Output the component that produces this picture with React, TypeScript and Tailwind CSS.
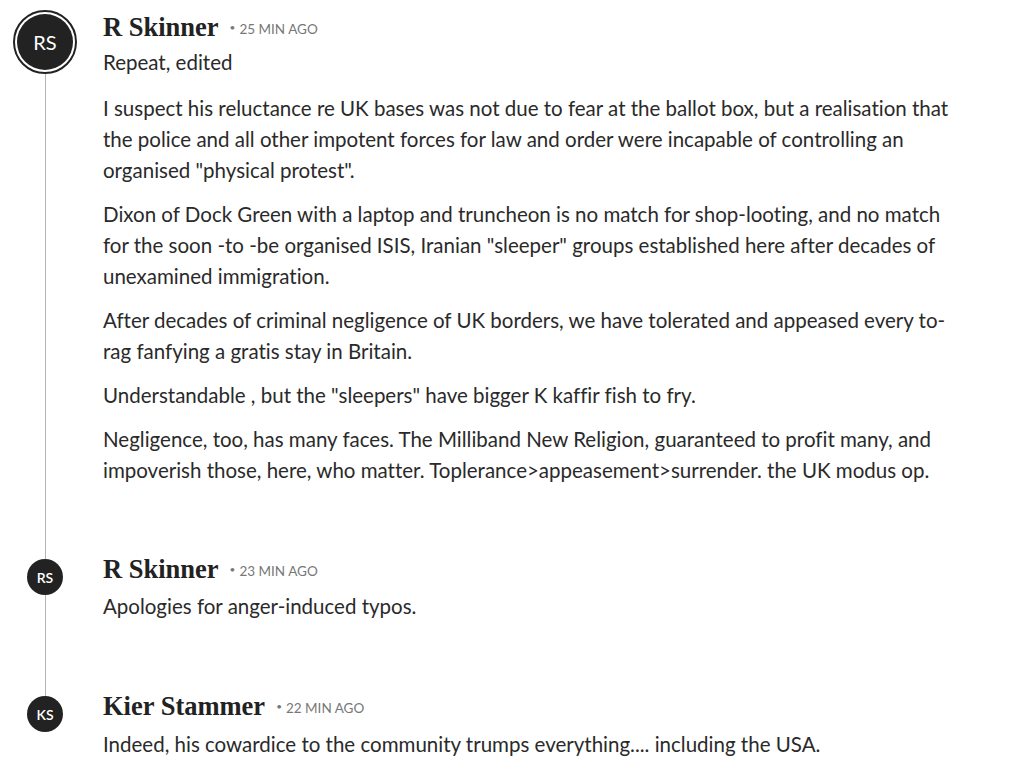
import React from "react";

const sans = { fontFamily: "Lato, 'Noto Sans', sans-serif", fontVariantLigatures: "none" as const };

function Avatar({ initials, big }: { initials: string; big?: boolean }) {
  if (big) {
    return (
      <div className="w-[64px] h-[64px] rounded-full border-2 border-[#222] p-[2px] bg-white shrink-0">
        <div className="w-full h-full rounded-full bg-[#222] flex items-center justify-center text-white text-[20px]" style={sans}>
          {initials}
        </div>
      </div>
    );
  }
  return (
    <div className="w-[36px] h-[36px] rounded-full bg-[#222] flex items-center justify-center text-white text-[14px] font-semibold shrink-0" style={sans}>
      {initials}
    </div>
  );
}

function Header({ name, time }: { name: string; time: string }) {
  return (
    <div className="flex items-baseline h-[36px] leading-[36px]">
      <span className="text-[26.5px] font-bold text-[#222]" style={{ fontFamily: "'Liberation Serif', serif" }}>
        {name}
      </span>
      <span className="ml-[11px] text-[13.5px] text-[#777] uppercase relative top-[-2px]" style={sans}>
        <span className="text-[10px] relative top-[-3px] mr-[4px]">•</span>
        {time}
      </span>
    </div>
  );
}

function Body({ paras }: { paras: string[] }) {
  return (
    <div className="text-[20.5px] leading-[31px] text-[#2a2a2a]" style={sans}>
      {paras.map((p, i) => (
        <p key={i} className={i === 0 ? "" : i === 1 ? "mt-[15px]" : "mt-[13px]"}>
          {p}
        </p>
      ))}
    </div>
  );
}

export default function App() {
  return (
    <div className="bg-white w-[1025px] min-h-[773px] overflow-hidden">
      {/* comment 1 */}
      <div className="flex">
        <div className="w-[90px] flex flex-col items-center pt-[10px]">
          <Avatar initials="RS" big />
          <div className="flex-1 w-px bg-[#b5b5b5]" />
        </div>
        <div className="w-[860px] ml-[13px] pt-[9px] pb-[65px]">
          <Header name="R Skinner" time="25 min ago" />
          <div className="mt-[2px]">
            <Body
              paras={[
                "Repeat, edited",
                "I suspect his reluctance re UK bases was not due to fear at the ballot box, but a realisation that the police and all other impotent forces for law and order were incapable of controlling an organised \"physical protest\".",
                "Dixon of Dock Green with a laptop and truncheon is no match for shop-looting, and no match for the soon -to -be organised ISIS, Iranian \"sleeper\" groups established here after decades of unexamined immigration.",
                "After decades of criminal negligence of UK borders, we have tolerated and appeased every to-rag fanfying a gratis stay in Britain.",
                "Understandable , but the \"sleepers\" have bigger K kaffir fish to fry.",
                "Negligence, too, has many faces. The Milliband New Religion, guaranteed to profit many, and impoverish those, here, who matter. Toplerance>appeasement>surrender. the UK modus op.",
              ]}
            />
          </div>
        </div>
      </div>
      {/* comment 2 */}
      <div className="flex">
        <div className="w-[90px] flex flex-col items-center">
          <div className="h-[8px] w-px bg-[#b5b5b5]" />
          <Avatar initials="RS" />
          <div className="flex-1 w-px bg-[#b5b5b5]" />
        </div>
        <div className="w-[860px] ml-[13px] pb-[66px]">
          <Header name="R Skinner" time="23 min ago" />
          <div className="mt-[4px]">
            <Body paras={["Apologies for anger-induced typos."]} />
          </div>
        </div>
      </div>
      {/* comment 3 */}
      <div className="flex">
        <div className="w-[90px] flex flex-col items-center">
          <div className="h-[8px] w-px bg-[#b5b5b5]" />
          <Avatar initials="KS" />
        </div>
        <div className="w-[860px] ml-[13px]">
          <Header name="Kier Stammer" time="22 min ago" />
          <div className="mt-[5px]">
            <Body paras={["Indeed, his cowardice to the community trumps everything.... including the USA."]} />
          </div>
        </div>
      </div>
    </div>
  );
}
